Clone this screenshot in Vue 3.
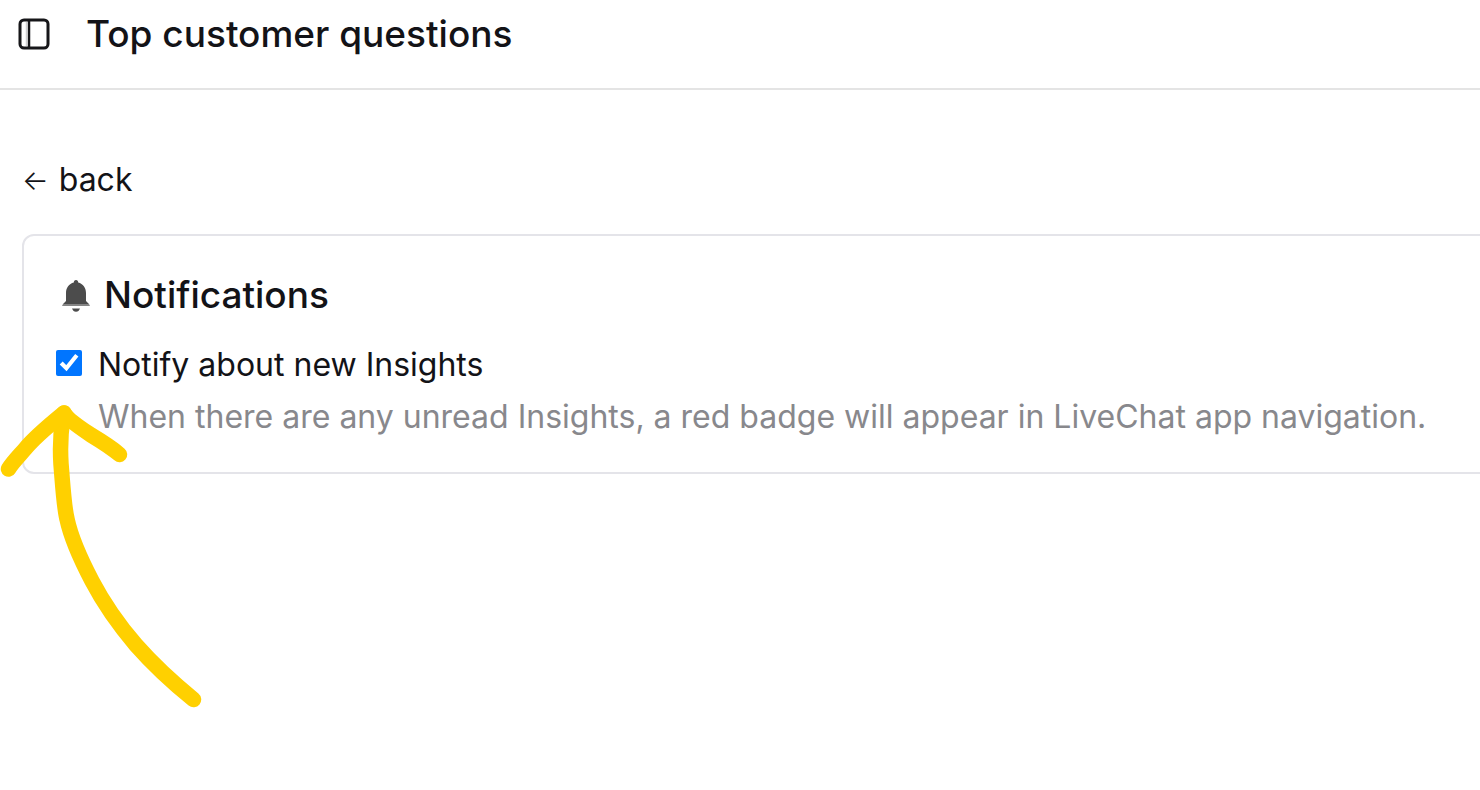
<script setup>
import { ref } from 'vue'
const notify = ref(true)
</script>

<template>
  <div class="page">
    <header class="topbar">
      <button class="toggle" type="button" aria-label="Toggle sidebar">
        <svg width="32" height="32" viewBox="0 0 32 32" fill="none" stroke="#161619">
          <rect x="2" y="2" width="28" height="28" rx="4" stroke-width="3" />
          <path d="M11 2v28" stroke-width="2.500" />
          <path d="M8.500 4v24" stroke="#d0d0d2" stroke-width="1.500" />
        </svg>
      </button>
      <h1>Top customer questions</h1>
    </header>
    <main>
      <a class="back" href="#"><span class="glyph">←</span> back</a>
      <section class="card">
        <h2>
          <svg width="28" height="34" viewBox="0 0 28 34" fill="#4c4c4c">
            <path d="M14 2c-1.500 0-2.200 1-2.200 2.600C7 5.800 4 10 4 15v8l-3 3h26l-3-3v-8c0-5-3-9.200-7.800-10.400C16.200 3 15.500 2 14 2z" />
            <path d="M1 26h26l1 2H0z" fill="#858585" />
            <path d="M10 30.500h8c-.8 2-2 3.300-4 3.300s-3.200-1.300-4-3.300z" />
          </svg>
          Notifications
        </h2>
        <div class="option">
          <input id="notify" v-model="notify" type="checkbox" aria-describedby="hint" />
          <div>
            <label for="notify">Notify about new Insights</label>
            <p id="hint">When there are any unread Insights, a red badge will appear in LiveChat app navigation.</p>
          </div>
        </div>
        <svg class="arrow" width="204" height="308" viewBox="0 0 204 308" fill="none" stroke="#ffd000" stroke-width="15.500" stroke-linecap="round" stroke-linejoin="round" aria-hidden="true">
          <path d="M193.500 299.500C172 282 151 262 136 245C118 224 103 202 92 181C81 160 71 138 67 119C64 107 63 88 61 64C60 48 60 36 63 17" />
          <path d="M8.500 69C12 63 18 57 25 49C33 39 42 31 64 13" />
          <path d="M64 13C68 20 82 29 91 35C101 41 112 48 119.500 54.500" />
        </svg>
      </section>
    </main>
  </div>
</template>

<style>
body {
  margin: 0;
  background: #fff;
}
</style>

<style scoped>
.page {
  color: #131317;
  font-family: Inter, "Liberation Sans", sans-serif;
  font-size: 32px;
  font-weight: 400;
  overflow: hidden;
  min-height: 100vh;
}
.topbar {
  display: flex;
  align-items: center;
  gap: 36px;
  height: 68px;
  padding: 0 18px 20px;
  border-bottom: 2px solid #e4e4e4;
}
.toggle {
  display: flex;
  padding: 0;
  border: 0;
  background: none;
}
h1, h2 {
  margin: 0;
  font-size: 37px;
  font-weight: 500;
  line-height: 44px;
}
main {
  padding: 68px 0 0 22px;
}
.back {
  display: flex;
  align-items: center;
  gap: 10px;
  width: fit-content;
  color: inherit;
  text-decoration: none;
  line-height: 44px;
}
.glyph {
  font-size: 28px;
  font-weight: 300;
}
.card {
  position: relative;
  margin: 32px -20px 0 0;
  padding: 37px 32px 29px;
  border: 2px solid #e4e4e9;
  border-radius: 12px;
}
h2 {
  display: flex;
  align-items: center;
  gap: 14px;
  padding-left: 6px;
}
.option {
  display: flex;
  align-items: flex-start;
  gap: 16px;
  margin-top: 22px;
  line-height: 52px;
  white-space: nowrap;
}
input {
  width: 26px;
  height: 26px;
  margin: 11px 0;
  flex: none;
  accent-color: #0075ff;
}
p {
  margin: 0;
  color: #88888c;
}
.arrow {
  position: absolute;
  left: -24px;
  top: 164px;
  pointer-events: none;
}
</style>
